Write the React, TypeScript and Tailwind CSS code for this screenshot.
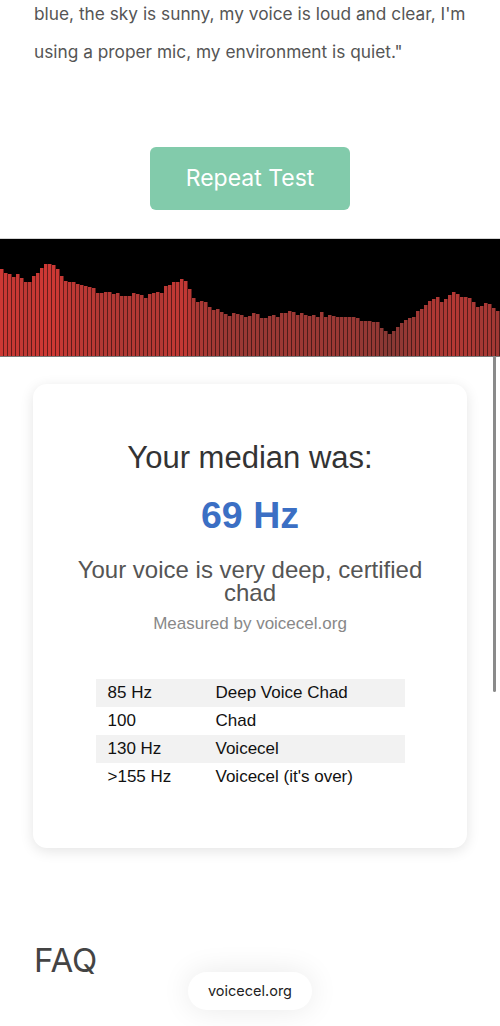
import React from "react";

// bar tops (screen y) read off the reference; bars stand on y=356
const KEYS: [number, number][] = [
  [0, 269], [5, 269], [6, 277], [9, 273], [12, 277], [17, 277], [18, 271], [21, 277],
  [24, 281], [28, 285], [32, 277], [36, 275], [42, 267], [47, 263], [53, 265], [57, 268],
  [60, 273], [63, 280], [68, 282], [73, 282], [77, 284], [80, 287], [83, 284], [87, 287],
  [93, 287], [95, 293], [105, 293], [107, 291], [110, 292], [113, 294], [117, 292],
  [120, 296], [127, 296], [128, 298], [132, 293], [135, 293], [137, 295], [140, 292],
  [143, 298], [147, 298], [150, 293], [155, 293], [160, 292], [162, 293], [163, 289],
  [167, 285], [170, 285], [173, 282], [177, 283], [180, 280], [183, 278], [187, 283],
  [188, 288], [192, 291], [193, 298], [197, 302], [200, 302], [203, 301], [207, 302],
  [209, 307], [212, 310], [217, 310], [218, 309], [222, 312], [224, 311], [227, 318],
  [230, 316], [233, 313], [237, 314], [240, 314], [243, 317], [247, 317], [249, 315],
  [250, 317], [253, 313], [257, 313], [260, 318], [268, 318], [272, 314], [277, 318],
  [280, 313], [287, 313], [290, 311], [293, 312], [298, 315], [302, 313], [308, 317],
  [312, 314], [317, 318], [320, 313], [323, 311], [325, 317], [330, 315], [337, 317],
  [357, 317], [360, 321], [365, 322], [367, 319], [372, 324], [375, 320], [378, 322],
  [382, 329], [385, 331], [388, 333], [391, 336], [393, 332], [397, 327], [400, 325],
  [403, 322], [407, 319], [412, 318], [415, 316], [418, 310], [422, 309], [425, 306],
  [430, 301], [435, 298], [438, 297], [442, 303], [445, 300], [448, 297], [452, 293],
  [454, 292], [457, 293], [460, 297], [468, 297], [472, 300], [475, 305], [478, 308],
  [482, 306], [485, 303], [487, 302], [490, 304], [493, 307], [497, 313], [500, 304],
];

function topAt(x: number) {
  for (let i = 1; i < KEYS.length; i++) {
    const [x1, y1] = KEYS[i];
    const [x0, y0] = KEYS[i - 1];
    if (x <= x1) {
      const t = x1 === x0 ? 0 : (x - x0) / (x1 - x0);
      return y0 + (y1 - y0) * t;
    }
  }
  return KEYS[KEYS.length - 1][1];
}

const bars = Array.from({ length: 125 }, (_, i) => {
  const h = Math.round(356 - topAt(i * 4 + 1.5));
  const r = Math.min(205, Math.round(110 + h * 1.1));
  return { h, color: `rgb(${r},56,52)` };
});

const rows = [
  ["85 Hz", "Deep Voice Chad"],
  ["100", "Chad"],
  ["130 Hz", "Voicecel"],
  [">155 Hz", "Voicecel (it's over)"],
];

export default function App() {
  return (
    <div className="relative h-[1026px] overflow-hidden bg-white font-['Inter',sans-serif]">
      <p className="-mt-[5px] px-[34px] text-[17.3px] leading-[38px] text-[#555] whitespace-nowrap">
        blue, the sky is sunny, my voice is loud and clear, I'm
        <br />
        using a proper mic, my environment is quiet."
      </p>

      <div className="mt-[76px] flex justify-center">
        <button
          type="button"
          className="h-[63px] w-[200px] rounded-[6px] bg-[#82cbab] text-[23px] text-white"
        >
          Repeat Test
        </button>
      </div>

      <div className="mt-[28px] flex h-[119px] items-end overflow-hidden border-t border-b border-t-[#d4d4d4] border-b-[#7a7a7a] bg-black">
        {bars.map((b, i) => (
          <div
            key={i}
            className="w-[4px] shrink-0 shadow-[inset_-1px_0_0_rgba(0,0,0,0.5)]"
            style={{ height: b.h, backgroundColor: b.color }}
          />
        ))}
      </div>

      <section className="mx-[33px] mt-[27px] rounded-[14px] bg-white px-5 pt-[57px] pb-[57px] text-center font-['Liberation_Sans',Arial,sans-serif] shadow-[0_3px_14px_rgba(0,0,0,0.11)]">
        <h2 className="text-[31px] leading-[34px] text-[#333]">Your median was:</h2>
        <div className="mt-[20px] text-[37.5px] leading-[41px] font-bold text-[#3b6fc4]">69 Hz</div>
        <p className="mt-[22px] text-[24px] leading-[23px] text-[#555]">
          Your voice is very deep, certified chad
        </p>
        <p className="mt-[10px] text-[17px] leading-[20px] text-[#888]">Measured by voicecel.org</p>

        <table className="mx-auto mt-[45px] w-[309px] text-left text-[17px] text-[#111]">
          <tbody>
            {rows.map(([hz, label], i) => (
              <tr key={hz} className={i % 2 === 0 ? "h-[28px] bg-[#f2f2f2]" : "h-[28px]"}>
                <td className="w-[108px] pl-[12px]">{hz}</td>
                <td className="pl-[12px]">{label}</td>
              </tr>
            ))}
          </tbody>
        </table>
      </section>

      <h2 className="mt-[92px] px-[34px] text-[33px] leading-[40px] text-[#444]">FAQ</h2>

      <div className="absolute top-[972px] left-1/2 flex h-[38px] w-[124px] -translate-x-1/2 items-center justify-center rounded-full bg-white text-[14.5px] text-[#222] shadow-[0_0_30px_rgba(0,0,0,0.09)]">
        voicecel.org
      </div>

      <div className="absolute top-[356px] right-[4px] h-[336px] w-[3px] rounded-full bg-[#8a8a8a]" />
    </div>
  );
}
